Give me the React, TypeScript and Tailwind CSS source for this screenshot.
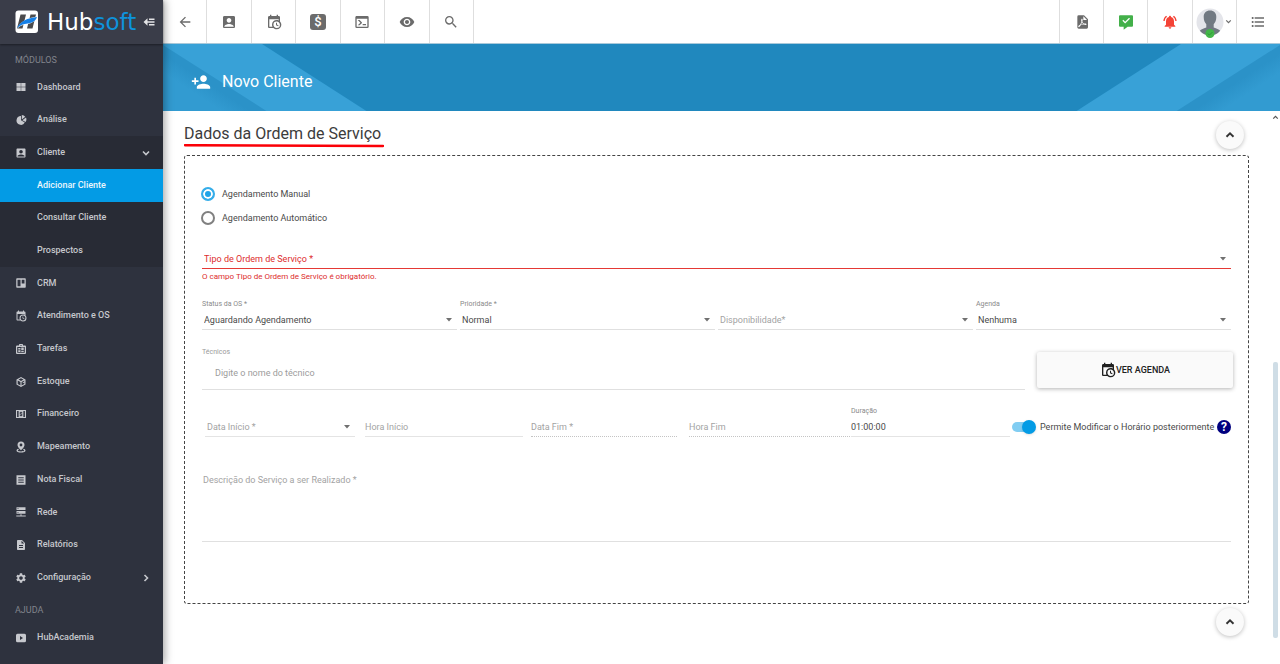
import type { ReactNode } from "react";
import {
  MdAccountBox,
  MdArrowBack,
  MdDescription,
  MdFormatListBulleted,
  MdNotificationsActive,
  MdPersonAdd,
  MdRemoveRedEye,
  MdSearch,
  MdSettings,
} from "react-icons/md";

const CALENDAR_CLOCK =
  "M15,13H16.5V15.82L18.94,17.23L18.19,18.53L15,16.69V13M19,8H5V19H9.67C9.24,18.09 9,17.07 9,16A7,7 0 0,1 16,9C17.07,9 18.09,9.24 19,9.67V8M5,21C3.89,21 3,20.1 3,19V5C3,3.89 3.89,3 5,3H6V1H8V3H16V1H18V3H19A2,2 0 0,1 21,5V11.1C22.24,12.36 23,14.09 23,16A7,7 0 0,1 16,23C14.09,23 12.36,22.24 11.1,21H5M16,11.15A4.85,4.85 0 0,0 11.15,16C11.15,18.68 13.32,20.85 16,20.85A4.85,4.85 0 0,0 20.85,16C20.85,13.32 18.68,11.15 16,11.15Z";
const CONSOLE =
  "M20,19V7H4V19H20M20,3A2,2 0 0,1 22,5V19A2,2 0 0,1 20,21H4A2,2 0 0,1 2,19V5C2,3.89 2.9,3 4,3H20M13,17V15H18V17H13M9.58,13L5.57,9H8.4L11.7,12.3C12.09,12.69 12.09,13.33 11.7,13.72L8.42,17H5.59L9.58,13Z";
const FILE_PDF =
  "M14,9H19.5L14,3.5V9M7,2H15L21,8V20A2,2 0 0,1 19,22H7C5.89,22 5,21.1 5,20V4A2,2 0 0,1 7,2M11.93,12.44C12.34,13.34 12.86,14.08 13.46,14.59L13.87,14.91C13,15.07 11.8,15.35 10.53,15.84V15.84L10.42,15.88L10.92,14.84C11.37,13.97 11.7,13.18 11.93,12.44M18.41,16.25C18.59,16.07 18.68,15.84 18.69,15.59C18.72,15.39 18.67,15.2 18.57,15.04C18.28,14.57 17.53,14.35 16.29,14.35L15,14.42L14.13,13.84C13.5,13.32 12.93,12.41 12.53,11.28L12.57,11.14C12.9,9.81 13.21,8.2 12.55,7.54C12.39,7.38 12.17,7.3 11.94,7.3H11.7C11.33,7.3 11,7.69 10.91,8.07C10.54,9.4 10.76,10.13 11.13,11.34V11.35C10.88,12.23 10.56,13.25 10.05,14.28L9.09,16.08L8.2,16.57C7,17.32 6.43,18.16 6.32,18.69C6.28,18.88 6.3,19.05 6.37,19.23L6.4,19.28L6.88,19.59L7.32,19.7C8.13,19.7 9.05,18.75 10.29,16.63L10.47,16.56C11.5,16.23 12.78,16 14.5,15.81C15.53,16.32 16.74,16.55 17.5,16.55C17.94,16.55 18.24,16.44 18.41,16.25Z";
const MESSAGE_CHECK =
  "M3,2H21A1.5,1.5 0 0,1 22.5,3.5V17.5A1.5,1.5 0 0,1 21,19H14.5L8.5,23.5V19H3A1.5,1.5 0 0,1 1.5,17.5V3.5A1.5,1.5 0 0,1 3,2M6.6,10.2L10.7,14.4L18,7.1L16.6,5.7L10.7,11.6L8,8.8Z";
const TILES = "M3,4H11.6V11.6H3ZM12.4,4H21V11.6H12.4ZM3,12.4H11.6V20H3ZM12.4,12.4H21V20H12.4Z";
const PIE =
  "M12,12.5V4A8.8,8.8 0 1,0 19.6,17ZM13.6,11V2.2A9,9 0 0,1 20.5,5.6ZM14.6,12.6L22,7A9.500,9.500 0 0,1 21.2,16Z";
const BOARD =
  "M4,2.5H20A1.5,1.5 0 0,1 21.5,4V20A1.5,1.5 0 0,1 20,21.5H4A1.5,1.5 0 0,1 2.5,20V4A1.5,1.5 0 0,1 4,2.5M5,5.5V18.5H11V5.5ZM13.4,5.5V13H19V5.5Z";
const CLIPBOARD =
  "M4,5H8V3.5A1.5,1.5 0 0,1 9.5,2H14.5A1.5,1.5 0 0,1 16,3.5V5H20A2,2 0 0,1 22,7V20A2,2 0 0,1 20,22H4A2,2 0 0,1 2,20V7A2,2 0 0,1 4,5M10,4V5H14V4ZM4.5,8V19.5H19.5V8ZM6.5,10H11V13H6.5ZM12.5,9H17.5V14.5H12.5ZM6.5,14.5H11V18H6.5ZM12.5,16H17.5V18H12.5Z";
const CUBE =
  "M12,2L21,6.8V17.2L12,22L3,17.2V6.8ZM12,4.4L7,7.1L12,9.8L17,7.1ZM5.4,9.2V15.9L10.9,18.8V12ZM18.6,9.2L13.1,12V18.8L18.6,15.9V13L15.5,14.5V12.3L18.6,10.8Z";
const CASH =
  "M2,4H22V20H2ZM4.2,6.2V17.8H7.2V6.2ZM16.8,6.2V17.8H19.8V6.2ZM11,7.5V8.7H9.5V12.7H12.7V13.7H9.5V15.3H11V16.5H13V15.3H14.5V11.3H11.3V10.3H14.5V8.7H13V7.5Z";
const MAP_PIN =
  "M12,1A7,7 0 0,1 19,8C19,12.5 12,18.5 12,18.5C12,18.5 5,12.5 5,8A7,7 0 0,1 12,1M12,5.2A2.8,2.8 0 1,0 12,10.8A2.8,2.8 0 1,0 12,5.2M6.5,15.5C4.5,16.2 3,17.4 3,19C3,21.8 7,23 12,23C17,23 21,21.8 21,19C21,17.4 19.5,16.2 17.5,15.5L16,17.2C17.5,17.7 18.4,18.3 18.4,19C18.4,20 16,20.9 12,20.9C8,20.9 5.6,20 5.6,19C5.6,18.3 6.5,17.7 8,17.2Z";
const NOTE = "M3,2.5H21V21.5H3ZM6.5,6.5V8.3H17.5V6.5ZM6.5,11.1V12.9H17.5V11.1ZM6.5,15.7V17.5H17.5V15.7Z";
const SERVER =
  "M3,2.5H21V8.2H3ZM3,10H21V15.7H3ZM11,16.5H13V18.8H21.5V21H2.5V18.8H11ZM5,4.6V6.1H7V4.6ZM5,12.1V13.6H7V12.1Z";
const VIDEO =
  "M5,3.5H19A3,3 0 0,1 22,6.5V17.5A3,3 0 0,1 19,20.5H5A3,3 0 0,1 2,17.5V6.5A3,3 0 0,1 5,3.5M10,8.2V15.8L16,12Z";

const CHEVRON_DOWN = "M6,9L12,15L18,9";
const CHEVRON_UP = "M6,15L12,9L18,15";
const CHEVRON_RIGHT = "M9,6L15,12L9,18";

function Glyph({ d, className }: { d: string; className: string }) {
  return (
    <svg viewBox="0 0 24 24" className={className} fill="currentColor" fillRule="evenodd" aria-hidden="true">
      <path d={d} />
    </svg>
  );
}

function Chevron({ d, className }: { d: string; className: string }) {
  return (
    <svg viewBox="0 0 24 24" className={className} fill="none" stroke="currentColor" strokeWidth="3.200" aria-hidden="true">
      <path d={d} />
    </svg>
  );
}

type Item = { label: string; icon?: ReactNode; tone?: string; end?: ReactNode };

const ICON = "size-3";
const items: Item[] = [
  { label: "Dashboard", icon: <Glyph d={TILES} className={ICON} /> },
  { label: "Análise", icon: <Glyph d={PIE} className={ICON} /> },
  { label: "Cliente", icon: <MdAccountBox className={ICON} />, tone: "bg-[#282b35]", end: <Chevron d={CHEVRON_DOWN} className={ICON} /> },
  { label: "Adicionar Cliente", tone: "bg-[#039be5] text-[#eaf6fc]" },
  { label: "Consultar Cliente", tone: "bg-[#282b35]" },
  { label: "Prospectos", tone: "bg-[#282b35]" },
  { label: "CRM", icon: <Glyph d={BOARD} className={ICON} /> },
  { label: "Atendimento e OS", icon: <Glyph d={CALENDAR_CLOCK} className={ICON} /> },
  { label: "Tarefas", icon: <Glyph d={CLIPBOARD} className={ICON} /> },
  { label: "Estoque", icon: <Glyph d={CUBE} className={ICON} /> },
  { label: "Financeiro", icon: <Glyph d={CASH} className={ICON} /> },
  { label: "Mapeamento", icon: <Glyph d={MAP_PIN} className={ICON} /> },
  { label: "Nota Fiscal", icon: <Glyph d={NOTE} className={ICON} /> },
  { label: "Rede", icon: <Glyph d={SERVER} className={ICON} /> },
  { label: "Relatórios", icon: <MdDescription className={ICON} /> },
  { label: "Configuração", icon: <MdSettings className={ICON} />, end: <Chevron d={CHEVRON_RIGHT} className={ICON} /> },
];

function MenuItem({ item }: { item: Item }) {
  return (
    <li className={item.tone ?? ""}>
      <a href="#" className="flex h-full items-center pr-[11px] pl-[15px]">
        <span className="flex w-[22px]">{item.icon}</span>
        <span className="flex-1">{item.label}</span>
        {item.end}
      </a>
    </li>
  );
}

function Sidebar() {
  return (
    <aside className="relative z-10 w-[163px] shrink-0 bg-[#2e323e] text-[9px] font-medium text-[#c6c8cd] shadow-[2px_0_8px_rgba(0,0,0,0.35)]">
      <div className="flex h-11 items-center bg-[#3a3d49] pr-2 pl-[15px] shadow-[0_1px_2px_rgba(0,0,0,0.4)]">
        <svg viewBox="0 0 24 24" className="size-6 shrink-0" aria-hidden="true">
          <rect x="0.5" y="0.5" width="22.500" height="22.500" rx="3" fill="#fff" />
          <path d="M5.500 4.500h5.500L7.500 18.500H2z" fill="#4b4b4d" />
          <path d="M15.500 4.500h5.500L17.500 18.500h-5.500z" fill="#4b4b4d" />
          <path d="M2 19C5 12 12 8 22 6.500c-1.500 4.500-5 7-9.500 7.600-4.500.5-7 1.600-10.500 4.900z" fill="#fff" />
          <path d="M2 18.200C5.500 11 12.500 7.800 22 6.900c-1.500 4-4.800 6-9.200 6.500-4.300.4-7.300 1.500-10.800 4.800z" fill="#1580e8" />
        </svg>
        <span className="ml-2 flex-1 font-['DejaVu_Sans',sans-serif] text-[23px] leading-6 font-normal text-white">
          Hub<span className="text-[#0e93dc]">soft</span>
        </span>
        <button type="button" aria-label="Recolher menu" className="shrink-0">
          <svg viewBox="0 0 12 10" className="h-[10px] w-3" fill="#e3e4e6" aria-hidden="true">
            <path d="M0.500 5l4-3.800v7.600zM4 4.300h7.500v1.400H4zM6 1.500h5.500v1.400H6zM6 7.100h5.500v1.400H6z" />
          </svg>
        </button>
      </div>
      <h2 className="flex h-[27px] items-center pt-[6px] pl-[15px] text-[9px] font-normal text-[#81848c]">MÓDULOS</h2>
      <nav>
        <ul className="grid h-[523px] auto-rows-fr">
          {items.map((item) => (
            <MenuItem key={item.label} item={item} />
          ))}
        </ul>
        <h2 className="flex h-7 items-center pt-[6px] pl-[15px] text-[9px] font-normal text-[#81848c]">AJUDA</h2>
        <ul className="grid h-8">
          <MenuItem item={{ label: "HubAcademia", icon: <Glyph d={VIDEO} className={ICON} /> }} />
        </ul>
      </nav>
    </aside>
  );
}

function ToolButton({ label, side, children }: { label: string; side: "left" | "right"; children: ReactNode }) {
  return (
    <button
      type="button"
      aria-label={label}
      className={`flex items-center justify-center border-[#dedede] ${side === "left" ? "border-r" : "border-l"}`}
    >
      {children}
    </button>
  );
}

function Toolbar() {
  return (
    <header className="flex h-11 justify-between border-b border-[#a9c9da] bg-white text-[#6b6b6b]">
      <div className="grid w-[311px] grid-cols-7">
        <ToolButton side="left" label="Voltar"><MdArrowBack className="size-4" /></ToolButton>
        <ToolButton side="left" label="Cliente"><MdAccountBox className="size-4" /></ToolButton>
        <ToolButton side="left" label="Agenda"><Glyph d={CALENDAR_CLOCK} className="size-4" /></ToolButton>
        <ToolButton side="left" label="Financeiro">
          <span className="flex size-4 items-center justify-center rounded-[3px] bg-[#6b6b6b] text-[13px] leading-4 font-medium text-white">$</span>
        </ToolButton>
        <ToolButton side="left" label="Console"><Glyph d={CONSOLE} className="size-4" /></ToolButton>
        <ToolButton side="left" label="Visualizar"><MdRemoveRedEye className="size-4" /></ToolButton>
        <ToolButton side="left" label="Buscar"><MdSearch className="size-4" /></ToolButton>
      </div>
      <div className="grid w-[221px] grid-cols-5">
        <ToolButton side="right" label="PDF"><Glyph d={FILE_PDF} className="size-4" /></ToolButton>
        <ToolButton side="right" label="Mensagens"><Glyph d={MESSAGE_CHECK} className="size-4 text-[#43b04a]" /></ToolButton>
        <ToolButton side="right" label="Notificações"><MdNotificationsActive className="size-4 text-[#f44336]" /></ToolButton>
        <ToolButton side="right" label="Perfil">
          <svg viewBox="0 0 28 32" className="h-8 w-7" aria-hidden="true">
            <circle cx="14" cy="16" r="13.500" fill="#e4e5ea" />
            <path d="M14 4.500c4 0 6.300 2.600 6.300 6.500 0 3.300-1 5.600-2.600 7.200v3.300c3 1 5 1.800 6.500 3.200A13.500 13.500 0 0 1 14 29.500a13.500 13.500 0 0 1-10.200-4.800c1.500-1.400 3.500-2.200 6.500-3.200v-3.300c-1.600-1.600-2.600-3.900-2.600-7.200C7.700 7.100 10 4.500 14 4.500z" fill="#717982" />
            <circle cx="14" cy="27.500" r="4.500" fill="#43b649" />
            <path d="M11.800 27.500l1.600 1.600 3-3" fill="none" stroke="#2d9a37" strokeWidth="1" />
          </svg>
          <Chevron d={CHEVRON_DOWN} className="size-[9px]" />
        </ToolButton>
        <ToolButton side="right" label="Lista"><MdFormatListBulleted className="size-4" /></ToolButton>
      </div>
    </header>
  );
}

function BannerStripes({ id, flip }: { id: string; flip?: boolean }) {
  return (
    <svg viewBox="0 0 205 68" className={`h-[68px] w-[205px] ${flip ? "-scale-x-100" : ""}`} aria-hidden="true">
      <defs>
        <linearGradient id={id} x1="60" y1="68" x2="85" y2="30" gradientUnits="userSpaceOnUse">
          <stop offset="0" stopColor="#329bd1" />
          <stop offset="0.35" stopColor="#2b92c8" />
          <stop offset="1" stopColor="#2b92c8" />
        </linearGradient>
      </defs>
      <path d="M0 0H99L205 68H0z" fill="#38a1d7" />
      <path d="M0 1L105 68H0z" fill={`url(#${id})`} />
    </svg>
  );
}

function Banner() {
  return (
    <div className="relative flex h-[67px] items-center bg-[#2088be] pt-2 pl-7 text-white">
      <div className="absolute inset-0 flex justify-between overflow-hidden">
        <BannerStripes id="stripe-start" />
        <BannerStripes id="stripe-end" flip />
      </div>
      <MdPersonAdd className="relative size-5" />
      <h1 className="relative ml-[11px] text-base leading-5">Novo Cliente</h1>
    </div>
  );
}

function Caret() {
  return (
    <svg viewBox="0 0 6 4" className="pointer-events-none absolute right-[5px] bottom-2 h-1 w-[6px]" fill="#707070" aria-hidden="true">
      <path d="M0 0h6L3 3.500z" />
    </svg>
  );
}

type SelectProps = { id: string; label?: string; value: string; tone?: string };

function FieldLabel({ id, label }: { id: string; label?: string }) {
  return label ? (
    <label htmlFor={id} className="h-[10px] text-[7px] leading-[10px] text-[#8a8a8a]">
      {label}
    </label>
  ) : (
    <div className="h-[10px]" />
  );
}

function SelectField({ id, label, value, tone = "border-[#e0e0e0] text-[#4a4a4a]" }: SelectProps) {
  return (
    <div className="flex min-w-0 flex-col">
      <FieldLabel id={id} label={label} />
      <div className="relative">
        <select
          id={id}
          aria-label={label ? undefined : value}
          defaultValue={value}
          className={`block h-[21px] w-full appearance-none border-b bg-transparent pt-px pl-[2px] outline-none ${tone}`}
        >
          <option>{value}</option>
        </select>
        <Caret />
      </div>
    </div>
  );
}

type InputProps = { id: string; label?: string; placeholder?: string; value?: string; dotted?: boolean };

function InputField({ id, label, placeholder, value, dotted }: InputProps) {
  return (
    <div className="flex min-w-0 flex-col">
      <FieldLabel id={id} label={label} />
      <input
        id={id}
        aria-label={label ? undefined : placeholder}
        placeholder={placeholder}
        defaultValue={value}
        className={`block h-[21px] w-full border-b bg-transparent pt-[2px] outline-none placeholder:text-[#a3a3a3] ${dotted ? "border-dotted border-[#c4c4c4]" : "border-[#e4e4e4]"}`}
      />
    </div>
  );
}

function Radio({ label, checked }: { label: string; checked?: boolean }) {
  return (
    <label className="flex h-6 w-fit items-center gap-[7px]">
      <input
        type="radio"
        name="agendamento"
        defaultChecked={checked}
        className="size-[14px] appearance-none rounded-full border-2 border-[#808080] bg-white checked:border-[#35ade9] checked:bg-[#1fa4e8] checked:shadow-[inset_0_0_0_2px_white]"
      />
      {label}
    </label>
  );
}

function CollapseButton({ label }: { label: string }) {
  return (
    <button
      type="button"
      aria-label={label}
      className="mr-[5px] flex size-7 items-center justify-center rounded-full bg-[#fafafa] text-[#333] shadow-[0_1px_4px_rgba(0,0,0,0.25)]"
    >
      <Chevron d={CHEVRON_UP} className="size-[14px]" />
    </button>
  );
}

function ServiceOrderForm() {
  return (
    <form className="rounded-[3px] border border-dashed border-[#444] px-[17px] pt-[26px] pb-[61px] text-[9px] leading-3 text-[#4a4a4a]">
      <div className="-ml-px flex flex-col">
        <Radio label="Agendamento Manual" checked />
        <Radio label="Agendamento Automático" />
      </div>

      <div className="mt-2">
        <SelectField id="tipo" value="Tipo de Ordem de Serviço *" tone="border-[#e53935] text-[#dd2c2c]" />
        <p className="mt-[2px] text-[8px] text-[#dd2c2c]">O campo Tipo de Ordem de Serviço é obrigatório.</p>
      </div>

      <div className="mt-4 grid grid-cols-4 gap-[3px]">
        <SelectField id="status" label="Status da OS *" value="Aguardando Agendamento" />
        <SelectField id="prioridade" label="Prioridade *" value="Normal" />
        <SelectField id="disponibilidade" value="Disponibilidade*" tone="border-[#e0e0e0] text-[#a3a3a3]" />
        <SelectField id="agenda" label="Agenda" value="Nenhuma" />
      </div>

      <div className="mt-[17px] -mr-[2px] flex items-start gap-3">
        <div className="min-w-0 flex-1">
          <label htmlFor="tecnicos" className="block h-[10px] text-[7px] leading-[10px] text-[#9a9a9a]">
            Técnicos
          </label>
          <input
            id="tecnicos"
            placeholder="Digite o nome do técnico"
            className="block h-[33px] w-full border-b border-[#e0e0e0] bg-transparent pl-[13px] outline-none placeholder:text-[#9c9c9c]"
          />
        </div>
        <button
          type="button"
          className="mt-[5px] flex h-9 w-[196px] items-center justify-center rounded-[2px] bg-[#fafafa] font-medium text-[#212121] shadow-[0_1px_4px_rgba(0,0,0,0.3)]"
        >
          <Glyph d={CALENDAR_CLOCK} className="size-4" />
          VER AGENDA
        </button>
      </div>

      <div className="mt-4 grid grid-cols-[163fr_166fr_158fr_162fr_161fr_219fr]">
        <div className="pr-[10px] pl-[3px]">
          <SelectField id="data-inicio" value="Data Início *" tone="border-[#e4e4e4] text-[#a3a3a3]" />
        </div>
        <div className="pr-2"><InputField id="hora-inicio" placeholder="Hora Início" /></div>
        <div className="pr-3"><InputField id="data-fim" placeholder="Data Fim *" dotted /></div>
        <div className="pr-px"><InputField id="hora-fim" placeholder="Hora Fim" dotted /></div>
        <div className="pr-[2px]"><InputField id="duracao" label="Duração" value="01:00:00" /></div>
        <div className="flex items-center justify-between pt-[11px]">
          <label className="flex items-center gap-1 whitespace-nowrap">
            <span className="relative flex h-[14px] w-6 items-center">
              <input
                type="checkbox"
                defaultChecked
                className="peer h-[10px] w-[22px] appearance-none rounded-full bg-[#bdbdbd] checked:bg-[#81cdf2]"
              />
              <span className="pointer-events-none absolute left-0 size-[14px] rounded-full bg-white shadow peer-checked:left-[10px] peer-checked:bg-[#039be5]" />
            </span>
            Permite Modificar o Horário posteriormente
          </label>
          <button
            type="button"
            aria-label="Ajuda"
            className="flex size-[14px] items-center justify-center rounded-full bg-[#00007f] text-[12px] leading-[14px] font-bold text-white"
          >
            ?
          </button>
        </div>
      </div>

      <div className="mt-[37px]">
        <textarea
          id="descricao"
          aria-label="Descrição do Serviço a ser Realizado"
          placeholder="Descrição do Serviço a ser Realizado *"
          className="block h-[68px] w-full resize-none border-b border-[#e0e0e0] bg-transparent pl-px outline-none placeholder:text-[#a3a3a3]"
        />
      </div>
    </form>
  );
}

export default function App() {
  return (
    <div className="flex min-h-screen bg-white font-[Roboto,sans-serif]">
      <Sidebar />
      <div className="flex min-w-0 flex-1 flex-col">
        <Toolbar />
        <Banner />
        <div className="flex flex-1">
          <main className="min-w-0 flex-1 pr-[22px] pl-[21px]">
            <div className="flex items-start justify-between pt-[10px] pb-[6px]">
              <div className="pt-[3px]">
                <h2 className="text-base leading-5 text-[#3c3c3c]">Dados da Ordem de Serviço</h2>
                <svg viewBox="0 0 200 4" preserveAspectRatio="none" className="h-1 w-full" aria-hidden="true">
                  <path d="M1 1.200C60 0.900 120 2.200 199 1.900" fill="none" stroke="#fb0007" strokeWidth="2.500" strokeLinecap="round" />
                </svg>
              </div>
              <CollapseButton label="Recolher dados" />
            </div>
            <ServiceOrderForm />
            <div className="flex justify-end pt-1">
              <CollapseButton label="Recolher seção" />
            </div>
          </main>
          <div className="flex w-[9px] flex-col items-center pt-[2px] text-[#555]">
            <Chevron d={CHEVRON_UP} className="size-[9px]" />
            <div className="mt-60 h-[276px] w-[5px] rounded-[2px] bg-[#cfdde6]" />
          </div>
        </div>
      </div>
    </div>
  );
}
